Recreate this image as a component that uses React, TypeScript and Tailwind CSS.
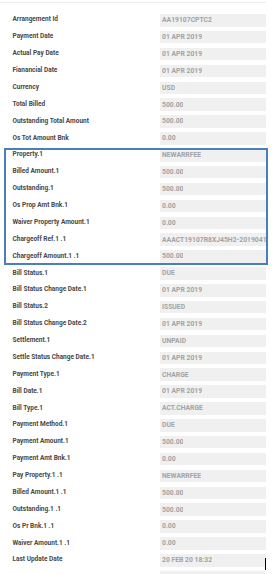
const rows: [string, string][] = [
  ["Arrangement Id", "AA19107CPTC2"],
  ["Payment Date", "01 APR 2019"],
  ["Actual Pay Date", "01 APR 2019"],
  ["Fianancial Date", "01 APR 2019"],
  ["Currency", "USD"],
  ["Total Billed", "500.00"],
  ["Outstanding Total Amount", "500.00"],
  ["Os Tot Amount Bnk", "0.00"],
];

const boxed: [string, string][] = [
  ["Property.1", "NEWARRFEE"],
  ["Billed Amount.1", "500.00"],
  ["Outstanding.1", "500.00"],
  ["Os Prop Amt Bnk.1", "0.00"],
  ["Waiver Property Amount.1", "0.00"],
  ["Chargeoff Ref.1 .1", "AAACT19107R8XJ45H2-20190417"],
  ["Chargeoff Amount.1 .1", "500.00"],
];

const rest: [string, string][] = [
  ["Bill Status.1", "DUE"],
  ["Bill Status Change Date.1", "01 APR 2019"],
  ["Bill Status.2", "ISSUED"],
  ["Bill Status Change Date.2", "01 APR 2019"],
  ["Settlement.1", "UNPAID"],
  ["Settle Status Change Date.1", "01 APR 2019"],
  ["Payment Type.1", "CHARGE"],
  ["Bill Date.1", "01 APR 2019"],
  ["Bill Type.1", "ACT.CHARGE"],
  ["Payment Method.1", "DUE"],
  ["Payment Amount.1", "500.00"],
  ["Payment Amt Bnk.1", "0.00"],
  ["Pay Property.1 .1", "NEWARRFEE"],
  ["Billed Amount.1 .1", "500.00"],
  ["Outstanding.1 .1", "500.00"],
  ["Os Pr Bnk.1 .1", "0.00"],
  ["Waiver Amount.1 .1", "0.00"],
];

const Row = ({ label, value, cursor }: { label: string; value: string; cursor?: boolean }) => (
  <div className="flex h-[16.875px] items-center">
    <div className="flex-1 pl-[12.5px] text-[6.5px] font-bold text-[#484848] whitespace-nowrap">
      {label}
    </div>
    <div className="relative flex h-[12.5px] w-[106.5px] items-center bg-[#f0f0f0] pl-[2.5px]">
      <span className="overflow-hidden whitespace-nowrap text-[6.8px] font-bold text-[#a3a3a3]">
        {value}
      </span>
      {cursor && <span className="absolute right-[0px] top-[4px] h-[12px] w-[1px] bg-black" />}
    </div>
  </div>
);

export default function App() {
  return (
    <div className="h-[574px] w-[275px] overflow-hidden bg-white" style={{ fontFamily: "Roboto, 'Liberation Sans', sans-serif" }}>
      <div className="w-[266px] pt-[2px]">
        <div className="border-t border-[#eeeeee] pt-[8.9px]">
          {rows.map(([l, v]) => (
            <Row key={l} label={l} value={v} />
          ))}
          <div className="relative">
            {boxed.map(([l, v]) => (
              <Row key={l} label={l} value={v} />
            ))}
            <div className="pointer-events-none absolute left-[4px] right-[-2px] top-[1.4px] bottom-[0.5px] border-2 border-[#4a7fbf]" />
          </div>
          {rest.map(([l, v]) => (
            <Row key={l} label={l} value={v} />
          ))}
          <Row label="Last Update Date" value="20 FEB 20 18:32" cursor />
          <Row label="" value="" />
        </div>
      </div>
    </div>
  );
}
